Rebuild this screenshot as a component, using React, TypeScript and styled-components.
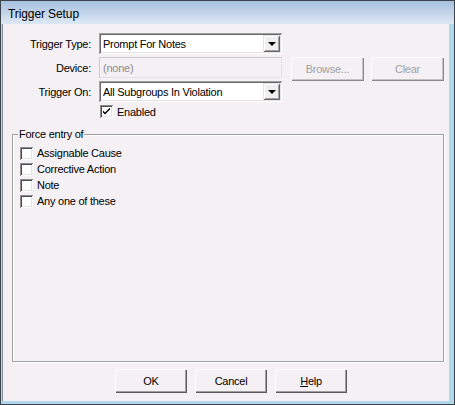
import React from 'react';
import styled, { createGlobalStyle } from 'styled-components';

const GlobalStyle = createGlobalStyle`
  html, body {
    margin: 0;
    padding: 0;
  }
  body {
    font-family: "Liberation Sans", Arial, sans-serif;
    font-size: 11px;
    color: #000;
  }
`;

const Window = styled.div`
  width: 455px;
  height: 405px;
  box-sizing: border-box;
  border: 1px solid #3d434a;
  display: flex;
  flex-direction: column;
  background: #b2d7ec;
`;

const TitleBar = styled.div`
  height: 23px;
  flex-shrink: 0;
  box-sizing: border-box;
  display: flex;
  align-items: center;
  padding: 2px 0 0 7px;
  background: linear-gradient(to bottom, #a7c1df, #dde8f4);
  font-size: 12px;
  letter-spacing: -0.1px;
`;

const Frame = styled.div`
  flex: 1;
  display: flex;
  padding: 0 5px 3px 1px;
`;

const Body = styled.div`
  flex: 1;
  display: flex;
  flex-direction: column;
  background: #f4f0f4;
  border-left: 1px solid #7f8c99;
  padding-top: 9px;
  letter-spacing: -0.25px;
`;

const FormGrid = styled.div`
  display: grid;
  grid-template-columns: 88px 183px 73px 73px;
  grid-template-rows: 24px 24px 24px 13px;
  column-gap: 8px;
  align-items: start;
`;

const Label = styled.div`
  height: 21px;
  display: flex;
  align-items: center;
  justify-content: flex-end;
  grid-column: 1;
`;

const Field = styled.div<{ $disabled?: boolean }>`
  height: 21px;
  box-sizing: border-box;
  display: flex;
  align-items: center;
  padding-left: 4px;
  background: ${p => (p.$disabled ? '#f4f0f4' : '#fff')};
  color: ${p => (p.$disabled ? '#8d8a8d' : '#000')};
  box-shadow: ${p =>
    p.$disabled
      ? 'inset 1px 1px 0 #cfcbcf, inset -1px -1px 0 #e4e1e4'
      : 'inset 1px 1px 0 #a0a0a0, inset -1px -1px 0 #fff, inset 2px 2px 0 #696969, inset -2px -2px 0 #e3e3e3'};
`;

const SelectField = styled(Field)`
  position: relative;
  justify-content: space-between;
  padding-right: 2px;
`;

const DropButton = styled.div`
  width: 17px;
  height: 17px;
  box-sizing: border-box;
  display: flex;
  align-items: center;
  justify-content: center;
  background: #f0f0f0;
  box-shadow: inset 1px 1px 0 #e3e3e3, inset -1px -1px 0 #696969, inset 2px 2px 0 #fff,
    inset -2px -2px 0 #a0a0a0;
`;

const Arrow = styled.div`
  width: 0;
  height: 0;
  border-left: 4px solid transparent;
  border-right: 4px solid transparent;
  border-top: 4px solid #000;
`;

const PushButton = styled.div<{ $disabled?: boolean; $width?: number }>`
  width: ${p => p.$width ?? 73}px;
  height: 24px;
  box-sizing: border-box;
  display: flex;
  align-items: center;
  justify-content: center;
  background: #f4f0f4;
  color: ${p => (p.$disabled ? '#a3a0a3' : '#000')};
  box-shadow: ${p =>
    p.$disabled
      ? 'inset 1px 1px 0 #fff, inset -1px -1px 0 #8c8a8c, inset -2px -2px 0 #c6c3c6'
      : 'inset 1px 1px 0 #fff, inset -1px -1px 0 #5a5a5a, inset -2px -2px 0 #a0a0a0'};
`;

const CheckRow = styled.label<{ $column?: number }>`
  display: flex;
  align-items: center;
  gap: 4px;
  height: ${p => (p.$column ? 13 : 16)}px;
  grid-column: ${p => p.$column ?? 'auto'};
  margin-left: ${p => (p.$column ? 1 : 0)}px;
`;

const Box = styled.span`
  width: 13px;
  height: 13px;
  box-sizing: border-box;
  display: flex;
  align-items: center;
  justify-content: center;
  background: #fff;
  box-shadow: inset 1px 1px 0 #8d8d8d, inset -1px -1px 0 #fff, inset 2px 2px 0 #4e4e4e,
    inset -2px -2px 0 #e3e3e3;
`;

const GroupBox = styled.div`
  position: relative;
  margin: 16px 5px 0 9px;
  height: 228px;
  box-sizing: border-box;
  border: 1px solid #a0a0a0;
  box-shadow: inset 1px 1px 0 #fff, 1px 1px 0 #fff;
  padding: 10px 0 0 7px;
  display: flex;
  flex-direction: column;
`;

const Caption = styled.span`
  position: absolute;
  top: -7px;
  left: 5px;
  padding: 0 1px;
  line-height: 13px;
  background: #f4f0f4;
`;

const ButtonRow = styled.div`
  display: flex;
  gap: 8px;
  margin-top: 7px;
  padding-left: 112px;
`;

const Check = () => (
  <svg width="7" height="7" viewBox="0 0 7 7">
    <path d="M0 2.5 L0 4.5 L2 6.5 L7 1.5 L7 -0.5 L2 4.5 Z" fill="#000" />
  </svg>
);

const options = ['Assignable Cause', 'Corrective Action', 'Note', 'Any one of these'];

export default function App() {
  return (
    <>
      <GlobalStyle />
      <Window>
        <TitleBar>Trigger Setup</TitleBar>
        <Frame>
          <Body>
            <FormGrid>
              <Label>Trigger Type:</Label>
              <SelectField>
                Prompt For Notes
                <DropButton>
                  <Arrow />
                </DropButton>
              </SelectField>

              <Label>Device:</Label>
              <Field $disabled>(none)</Field>
              <PushButton $disabled style={{ marginLeft: 1 }}>
                Browse...
              </PushButton>
              <PushButton $disabled>Clear</PushButton>

              <Label>Trigger On:</Label>
              <SelectField>
                All Subgroups In Violation
                <DropButton>
                  <Arrow />
                </DropButton>
              </SelectField>

              <CheckRow $column={2}>
                <Box>
                  <Check />
                </Box>
                Enabled
              </CheckRow>
            </FormGrid>

            <GroupBox>
              <Caption>Force entry of</Caption>
              {options.map(o => (
                <CheckRow key={o}>
                  <Box />
                  {o}
                </CheckRow>
              ))}
            </GroupBox>

            <ButtonRow>
              <PushButton $width={72}>OK</PushButton>
              <PushButton $width={72}>Cancel</PushButton>
              <PushButton $width={72}>
                <span>
                  <u>H</u>elp
                </span>
              </PushButton>
            </ButtonRow>
          </Body>
        </Frame>
      </Window>
    </>
  );
}
